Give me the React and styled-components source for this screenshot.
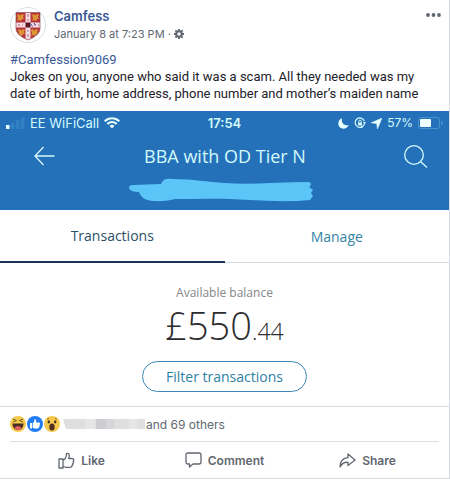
import React from 'react';
import styled, { createGlobalStyle } from 'styled-components';

const uiFont = `Inter, 'Liberation Sans', sans-serif`;
const textFont = `Roboto, 'Liberation Sans', sans-serif`;
const bankFont = `'Open Sans', 'Noto Sans', sans-serif`;

const GlobalStyle = createGlobalStyle`
    * {
        box-sizing: border-box;
    }
    body {
        margin: 0;
        background-color: #ffffff;
        font-family: ${uiFont};
    }
    button {
        margin: 0;
        padding: 0;
        border: 0;
        background: none;
        font: inherit;
        color: inherit;
        cursor: pointer;
    }
    a {
        text-decoration: none;
    }
    svg {
        display: block;
        flex: none;
    }
`;

const Post = styled.article`
    border-right: 1px solid #d8dae3;
    border-bottom: 1px solid #dadce0;
    background-color: #ffffff;
`;

const Header = styled.header`
    display: flex;
    align-items: flex-start;
    gap: 8px;
    padding: 7px 8px 0 10px;
`;

const Byline = styled.div`
    flex: 1;
`;

const Name = styled.a`
    display: block;
    font-size: 13px;
    line-height: 18px;
    font-weight: 600;
    color: #385898;
`;

const Meta = styled.div`
    display: flex;
    align-items: center;
    gap: 3px;
    font-size: 11px;
    line-height: 18px;
    color: #616770;
`;

const MoreButton = styled.button`
    padding: 6px 0;
    color: #616770;
`;

const Message = styled.p`
    margin: 0;
    padding: 8px 10px 9px;
    font-family: ${textFont};
    font-size: 13px;
    line-height: 17px;
    color: #1d2129;
    a {
        color: #385898;
    }
`;

const BankTop = styled.div`
    background-color: #2471ba;
    color: #d4fafa;
    padding-bottom: 8px;
`;

const StatusBar = styled.div`
    display: grid;
    grid-template-columns: 1fr auto 1fr;
    align-items: center;
    padding: 2px 6px 0;
    font-size: 12px;
    line-height: 20px;
`;

const StatusGroup = styled.div`
    display: flex;
    align-items: center;
    justify-content: ${props => props.$end ? 'flex-end' : 'flex-start'};
    gap: 5px;
`;

const Carrier = styled.span`
    font-size: 13px;
`;

const Clock = styled.time`
    font-size: 13px;
    font-weight: 600;
`;

const AccountBar = styled.div`
    display: flex;
    align-items: center;
    justify-content: space-between;
    padding: 8px 21px 0 34px;
`;

const BarButton = styled.button`
    width: 25px;
`;

const AccountName = styled.h1`
    margin: 0;
    padding-right: 12px;
    font-family: ${bankFont};
    font-size: 18px;
    line-height: 30px;
    font-weight: 400;
`;

const ScribbleRow = styled.div`
    display: flex;
    justify-content: center;
    padding: 7px 8px 0 0;
`;

const Tabs = styled.div`
    display: grid;
    grid-template-columns: 1fr 1fr;
    font-family: ${bankFont};
    font-size: 14px;
`;

const Tab = styled.button`
    height: 53px;
    color: ${props => props.$active ? '#2b5069' : '#3584a8'};
    border-bottom: ${props => props.$active ? '2px solid #1b3350' : '1px solid #d3d9e0'};
`;

const Balance = styled.section`
    display: flex;
    flex-direction: column;
    align-items: center;
    padding: 20px 0 14px;
    border-bottom: 1px solid #dadce0;
    font-family: ${bankFont};
`;

const BalanceLabel = styled.div`
    font-size: 12px;
    line-height: 20px;
    color: #85878a;
`;

const Amount = styled.div`
    font-size: 38px;
    line-height: 44px;
    font-weight: 300;
    color: #2c2c2e;
    small {
        font-size: 23px;
    }
`;

const FilterButton = styled.button`
    height: 31px;
    margin-top: 8px;
    padding: 0 23px;
    border: 1px solid #3c87b8;
    border-radius: 16px;
    font-size: 14px;
    color: #2f80a5;
`;

const Reactions = styled.div`
    display: flex;
    align-items: center;
    height: 35px;
    margin: 0 10px;
    border-bottom: 1px solid #dadde1;
    font-size: 12px;
    color: #616770;
`;

const Faces = styled.div`
    display: flex;
    gap: 1px;
`;

const HiddenName = styled.svg`
    margin: 0 1px 0 3px;
`;

const Actions = styled.div`
    display: grid;
    grid-template-columns: repeat(3, 1fr);
    padding: 0 10px;
`;

const Action = styled.button`
    display: flex;
    align-items: center;
    justify-content: center;
    gap: 6px;
    height: 36px;
    font-size: 12px;
    font-weight: 600;
    color: #616770;
`;

const lion = 'M1 2l2-1 1 1.500 2-1.500 2 1-1 2 1 2-2 0-1 2-2-1-2 1 1-3z';

const Crest = () => (
    <svg width="36" height="36" viewBox="0 0 36 36" role="img" aria-label="Camfess">
        <defs>
            <clipPath id="shield">
                <path d="M6 5.500h24v16c0 5-5 8.500-12 11.500C11 30 6 26.500 6 21.500z" />
            </clipPath>
        </defs>
        <circle cx="18" cy="18" r="17.500" fill="#fff" stroke="#d4dde5" />
        <g clipPath="url(#shield)">
            <path d="M5 5h26v29H5z" fill="#b73538" />
            <g fill="#dc9434">
                <path d={lion} transform="translate(6 6)" />
                <path d={lion} transform="translate(21 6)" />
                <path d={lion} transform="translate(7 21)" />
                <path d={lion} transform="translate(20 21)" />
            </g>
            <path d="M15.500 5h5v29h-5zM5 15.500h26v5H5z" fill="#f6dce3" />
            <path d="M18 7v3M18 12v2M18 23v2M18 27v3M8 18h2M12 18h1M24 18h2M28 18h1" stroke="#b98b9d" strokeWidth="1.300" />
            <path d="M15.500 15.500h5v5h-5z" fill="#5a1720" />
            <path d="M20.500 16.500l2 3M24 16l1.500 2" stroke="#3e4da0" />
        </g>
        <path d="M6 5.500h24v16c0 5-5 8.500-12 11.500C11 30 6 26.500 6 21.500z" fill="none" stroke="#8c5058" strokeWidth=".7" />
    </svg>
);

const Gear = () => (
    <svg width="10" height="10" viewBox="0 0 12 12" aria-hidden="true">
        <path d="M6 0v12M0 6h12M1.700 1.700l8.600 8.600M10.300 1.700L1.700 10.300" stroke="#616770" strokeWidth="2.200" />
        <circle cx="6" cy="6" r="3.300" fill="#fff" stroke="#616770" strokeWidth="2.400" />
    </svg>
);

const Dots = () => (
    <svg width="15" height="4" viewBox="0 0 15 4" fill="currentColor">
        <circle cx="2" cy="2" r="1.900" />
        <circle cx="7.500" cy="2" r="1.900" />
        <circle cx="13" cy="2" r="1.900" />
    </svg>
);

const Signal = () => (
    <svg width="19" height="12" viewBox="0 0 19 12">
        <path d="M0 8h3.500v4H0z" fill="#e8ffff" />
        <path d="M5 6h3.500v6H5zM10 3h3.500v9H10zM15 0h3.500v12H15z" fill="#3280c4" />
    </svg>
);

const Wifi = () => (
    <svg width="16" height="12" viewBox="0 0 16 12" fill="none" stroke="#e8ffff" strokeWidth="2">
        <path d="M.7 4.300c4.200-4 10.400-4 14.600 0M3.300 7c2.700-2.600 6.700-2.600 9.400 0" />
        <path d="M5.500 8.700c1.500-1.300 3.500-1.300 5 0L8 11.500z" fill="#e8ffff" stroke="none" />
    </svg>
);

const Moon = () => (
    <svg width="11" height="11" viewBox="0 0 11 11">
        <path d="M4 .3C3 5 6 8 10.700 7.200 9.500 9.500 7.600 10.700 5.500 10.700 2.500 10.700.3 8.500.3 5.500.3 3 1.800 1 4 .3z" fill="#e8ffff" />
    </svg>
);

const RotationLock = () => (
    <svg width="12" height="12" viewBox="0 0 12 12" fill="none" stroke="#d4fafa">
        <path d="M10.500 6.500A4.700 4.700 0 1 1 10.300 4M8.500 10.300l-1 .4" strokeWidth="1.200" />
        <path d="M9 5h3l-1.500 2.500z" fill="#d4fafa" stroke="none" />
        <path d="M4 5.500h4v3H4z" fill="#d4fafa" stroke="none" />
        <path d="M4.800 5.500V4.300a1.200 1.200 0 0 1 2.400 0v1.200" />
    </svg>
);

const Arrow = () => (
    <svg width="11" height="11" viewBox="0 0 11 11">
        <path d="M10.800.2L6.500 10.800 5.700 5.500.3 4.800z" fill="#e8ffff" stroke="#e8ffff" strokeWidth=".6" />
    </svg>
);

const Battery = () => (
    <svg width="25" height="12" viewBox="0 0 25 12">
        <rect x=".5" y=".5" width="21" height="11" rx="2.500" fill="none" stroke="#4a92cb" />
        <rect x="2" y="2" width="11" height="8" rx="1" fill="#f0ffff" />
        <path d="M23.800 4v4" stroke="#4a92cb" strokeWidth="1.500" />
    </svg>
);

const BackIcon = () => (
    <svg width="21" height="20" viewBox="0 0 21 20" fill="none" stroke="currentColor" strokeWidth="1.300">
        <path d="M9.500 1L1 10l8.500 9M1 10h19.500" />
    </svg>
);

const SearchIcon = () => (
    <svg width="25" height="25" viewBox="0 0 25 25" fill="none" stroke="currentColor" strokeWidth="1.300">
        <circle cx="11" cy="11" r="9.300" />
        <path d="M17.500 17.500l6.500 6" />
    </svg>
);

const Laugh = () => (
    <svg width="16" height="16" viewBox="0 0 16 16">
        <circle cx="8" cy="8" r="8" fill="#f6c84c" />
        <path d="M2.500 7.500h11c0 4-2.300 6.500-5.500 6.500s-5.500-2.500-5.500-6.500z" fill="#4b2e25" />
        <path d="M4.500 12c1.500-2.200 5.500-2.200 7 0-.8 1.300-2 2-3.500 2s-2.700-.7-3.500-2z" fill="#ec6268" />
        <path d="M3 3l3.500 1.500L3 6M13 3L9.500 4.500 13 6" fill="none" stroke="#6b6526" />
    </svg>
);

const LikeBadge = () => (
    <svg width="16" height="16" viewBox="0 0 16 16">
        <circle cx="8" cy="8" r="8" fill="#217cf0" />
        <path d="M3 7h2v5.500H3zM5.700 7.200C7.200 6.300 7.500 5 7.500 3.200c1.700-.2 2 1.600 1.500 3.300h3c1.200 0 1.300 1.200.6 1.600.5.500.4 1.300-.2 1.600.3.600 0 1.200-.5 1.400.2.900-.3 1.400-1.200 1.400H8c-1 0-1.700-.3-2.300-.7z" fill="#fff" />
    </svg>
);

const Wow = () => (
    <svg width="16" height="16" viewBox="0 0 16 16">
        <circle cx="8" cy="8" r="8" fill="#f6c84c" />
        <ellipse cx="8" cy="11" rx="2.700" ry="3.500" fill="#50301f" />
        <ellipse cx="4.800" cy="5.800" rx="1.200" ry="1.600" fill="#403328" />
        <ellipse cx="11.200" cy="5.800" rx="1.200" ry="1.600" fill="#403328" />
        <path d="M3 3.200l2-1M13 3.200l-2-1" stroke="#9a6b25" />
    </svg>
);

const LikeIcon = () => (
    <svg width="17" height="17" viewBox="0 0 17 17" fill="none" stroke="currentColor" strokeWidth="1.300" strokeLinejoin="round">
        <path d="M1 7h4v9H1zM5 8.500C7.500 7 8.500 5 8.500 1.500c2.700-.8 3.500 1.500 2.200 5h3.500c1.800 0 2 2 .9 2.600.9.900.5 2-.4 2.300.5 1 0 1.900-.8 2.100.1 1.200-.5 1.800-1.700 1.800H8.500c-1.500 0-2.500-.4-3.500-1" />
    </svg>
);

const CommentIcon = () => (
    <svg width="17" height="16" viewBox="0 0 17 16" fill="none" stroke="currentColor" strokeWidth="1.300" strokeLinejoin="round">
        <path d="M3 1h11c1.300 0 2 .7 2 2v7c0 1.300-.7 2-2 2H8l-3.500 3v-3H3c-1.300 0-2-.7-2-2V3c0-1.300.7-2 2-2z" />
    </svg>
);

const ShareIcon = () => (
    <svg width="17" height="15" viewBox="0 0 17 15" fill="none" stroke="currentColor" strokeWidth="1.300" strokeLinejoin="round">
        <path d="M9 1l7 6-7 5.500V9.300C6 9 3 10.500 1 14c.2-5.500 3-9 8-9.300z" />
    </svg>
);

const App = () => (
    <>
        <GlobalStyle />
        <Post>
            <Header>
                <Crest />
                <Byline>
                    <Name href="#camfess">Camfess</Name>
                    <Meta>January 8 at 7:23 PM · <Gear /></Meta>
                </Byline>
                <MoreButton aria-label="More"><Dots /></MoreButton>
            </Header>
            <Message>
                <a href="#camfession9069">#Camfession9069</a><br />
                Jokes on you, anyone who said it was a scam. All they needed was my
                date of birth, home address, phone number and mother’s maiden name
            </Message>

            <BankTop>
                <StatusBar>
                    <StatusGroup><Signal /><Carrier>EE WiFiCall</Carrier><Wifi /></StatusGroup>
                    <Clock>17:54</Clock>
                    <StatusGroup $end><Moon /><RotationLock /><Arrow />57%<Battery /></StatusGroup>
                </StatusBar>
                <AccountBar>
                    <BarButton aria-label="Back"><BackIcon /></BarButton>
                    <AccountName>BBA with OD Tier N</AccountName>
                    <BarButton aria-label="Search"><SearchIcon /></BarButton>
                </AccountBar>
                <ScribbleRow>
                    <svg width="184" height="24" viewBox="0 0 184 24" aria-hidden="true">
                        <path d="M4 7l28-1c2-5 6-5.500 11-5 22 0 35 3 53 4 25 2 55-1 84-1 3 1 2 4 0 5l4 3-2 3 2 3-3 4c-20 2-40 1-60 0-28-2-48-1-75-1-12 3-24 3-30 0-4-2-5-5-6-7-5 0-9-1-10-4 0-2 1-3 4-3z" fill="#5cc5f8" />
                    </svg>
                </ScribbleRow>
            </BankTop>
            <Tabs role="tablist">
                <Tab role="tab" aria-selected="true" $active>Transactions</Tab>
                <Tab role="tab" aria-selected="false">Manage</Tab>
            </Tabs>
            <Balance>
                <BalanceLabel>Available balance</BalanceLabel>
                <Amount>£550<small>.44</small></Amount>
                <FilterButton>Filter transactions</FilterButton>
            </Balance>

            <Reactions>
                <Faces><Laugh /><LikeBadge /><Wow /></Faces>
                <HiddenName width="82" height="10" viewBox="0 0 82 10" aria-hidden="true">
                    <path d="M0 0h82v10H3z" fill="#dedfe1" />
                    <path d="M22 0h10v10H22zM66 0h8v10h-8z" fill="#e6e6e8" />
                    <path d="M33 0h10v10H33z" fill="#cccdd1" />
                    <path d="M43 0h8v10h-8z" fill="#d6d7da" />
                </HiddenName>
                and 69 others
            </Reactions>
            <Actions>
                <Action><LikeIcon />Like</Action>
                <Action><CommentIcon />Comment</Action>
                <Action><ShareIcon />Share</Action>
            </Actions>
        </Post>
    </>
);

export default App;
